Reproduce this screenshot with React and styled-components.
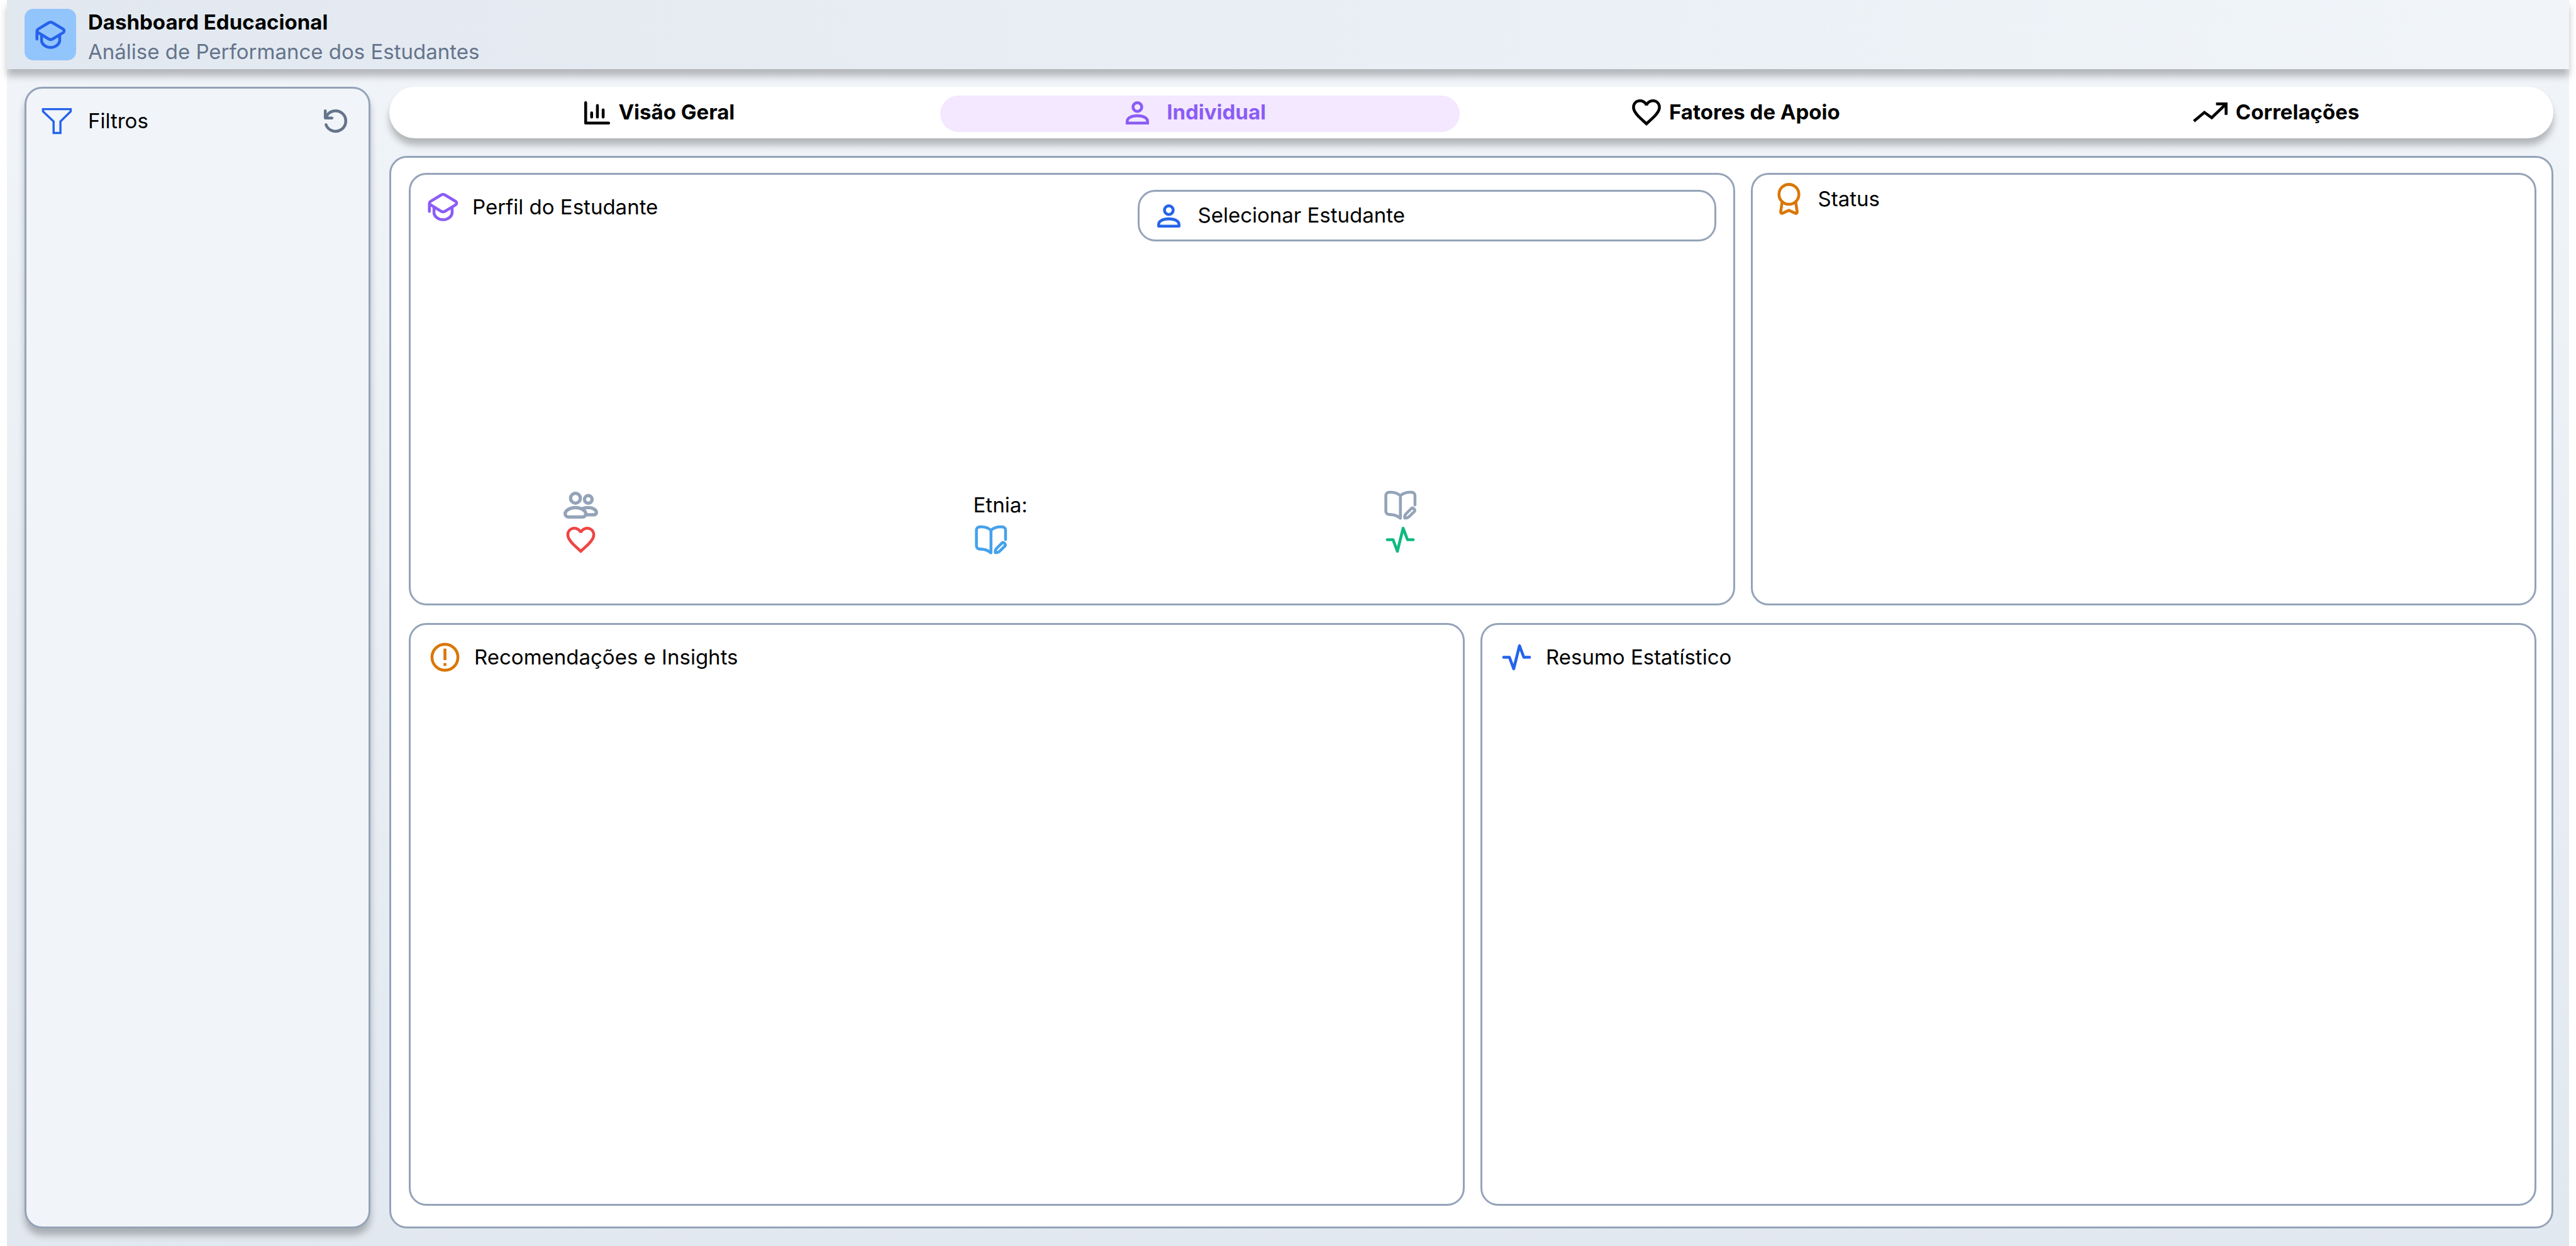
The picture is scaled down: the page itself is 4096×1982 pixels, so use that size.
import React from "react";
import styled, { createGlobalStyle } from "styled-components";

const ink = {
  blue: "#2563eb",
  sky: "#45a2ec",
  purple: "#8b5cf6",
  amber: "#d97706",
  red: "#ef4444",
  green: "#10b981",
  slate: "#64748b",
  line: "#94a3b8",
};

const dropShadow = "0 11px 11px rgba(0, 0, 0, 0.25)";

const GlobalStyle = createGlobalStyle`
  *, *::before, *::after { box-sizing: border-box; }
  body {
    margin: 0;
    background: #ffffff;
    color: #000000;
    font-family: Inter, "Liberation Sans", sans-serif;
    font-size: 33px;
    line-height: 42px;
  }
  h1, h2, p { margin: 0; font-size: inherit; font-weight: 400; }
  button, select { font: inherit; color: inherit; }
`;

const Page = styled.div`
  display: flex;
  flex-direction: column;
  min-height: 100vh;
  margin: 0 11px;
  background: linear-gradient(180deg, #f1f5f9, #e2e8f0);
`;

const Header = styled.header`
  display: flex;
  gap: 19px;
  padding: 14px 28px;
  background: linear-gradient(90deg, #e2e8f0, #f1f5f9);
  box-shadow: ${dropShadow};
`;

const Logo = styled.div`
  display: grid;
  place-items: center;
  width: 82px;
  height: 82px;
  border-radius: 14px;
  background: #93c5fd;
`;

const Heading = styled.div`
  display: flex;
  flex-direction: column;
  gap: 5px;
  height: 82px;
`;

const Title = styled.h1`
  font-weight: 700;
`;

const Subtitle = styled.p`
  color: ${ink.slate};
`;

const Body = styled.div`
  flex: 1;
  display: grid;
  grid-template-columns: 550px 1fr;
  gap: 30px;
  padding: 28px 25px 28px 28px;
`;

const Sidebar = styled.aside`
  padding: 24px 25px 24px 21px;
  border: 3px solid ${ink.line};
  border-radius: 28px;
  background: #f1f5f9;
  box-shadow: ${dropShadow};
`;

const SidebarHead = styled.div`
  display: flex;
  align-items: center;
  gap: 22px;
`;

const Label = styled.h2`
  flex: 1;
  padding-bottom: 2px;
`;

const IconButton = styled.button`
  display: flex;
  padding: 0;
  border: 0;
  background: none;
  cursor: pointer;
`;

const Content = styled.main`
  display: flex;
  flex-direction: column;
  gap: 28px;
`;

const Tabs = styled.nav`
  display: grid;
  grid-template-columns: repeat(4, 1fr);
  gap: 33px;
  padding: 14px 22px 10px 17px;
  border-radius: 41px;
  background: #ffffff;
  box-shadow: ${dropShadow};
`;

const Tab = styled.button`
  display: flex;
  align-items: center;
  justify-content: center;
  gap: ${(p) => (p.$active ? 28 : 13)}px;
  height: 58px;
  padding: 0 0 4px;
  border: 0;
  border-radius: 29px;
  background: ${(p) => (p.$active ? "#f3e8ff" : "transparent")};
  color: ${(p) => (p.$active ? ink.purple : "#000000")};
  font-weight: 700;
  cursor: pointer;

  &:not(:first-child) {
    padding-right: 12px;
  }
`;

const TabName = styled.span`
  padding-bottom: 2px;
`;

const Board = styled.section`
  flex: 1;
  display: grid;
  grid-template-rows: auto 1fr;
  gap: 28px;
  padding: 24px 24px 33px 28px;
  border: 3px solid ${ink.line};
  border-radius: 28px;
  background: #ffffff;
`;

const Row = styled.div`
  display: grid;
  grid-template-columns: ${(p) => p.$columns};
  gap: 25px;
  min-height: ${(p) => p.$minHeight || 0}px;
`;

const Panel = styled.article`
  display: flex;
  flex-direction: column;
  border: 3px solid ${ink.line};
  border-radius: 28px;
  background: #ffffff;
`;

const PanelHead = styled.div`
  display: flex;
  align-items: flex-start;
  justify-content: space-between;
  padding: ${(p) => p.$padding};
`;

const PanelTitle = styled.div`
  display: flex;
  align-items: center;
  gap: 19px;
`;

const Picker = styled.label`
  display: flex;
  align-items: center;
  gap: 19px;
  width: 920px;
  height: 82px;
  padding: 0 19px;
  border: 3px solid ${ink.line};
  border-radius: 28px;
`;

const PickerSelect = styled.select`
  flex: 1;
  appearance: none;
  padding: 0 0 2px;
  border: 0;
  outline: 0;
  background: transparent;
`;

const Facts = styled.div`
  display: grid;
  grid-template-columns: 651fr 651fr 556fr;
  grid-auto-rows: 55px;
  align-items: center;
  margin-top: auto;
  padding: 0 0 74px 243px;
`;

const Fact = styled.p`
  padding-bottom: 2px;
`;

const Svg = styled.svg`
  display: block;
  flex: none;
  width: ${(p) => p.$w}px;
  height: ${(p) => p.$h}px;
  color: ${(p) => p.$color || "currentColor"};
`;

function Glyph({ w = 55, h = 55, box = "0 0 24 24", color, stroke = 2, cap = "round", join = "round", children }) {
  return (
    <Svg
      $w={w}
      $h={h}
      $color={color}
      viewBox={box}
      fill="none"
      stroke="currentColor"
      strokeWidth={stroke}
      strokeLinecap={cap}
      strokeLinejoin={join}
      aria-hidden="true"
    >
      {children}
    </Svg>
  );
}

const CapIcon = ({ color }) => (
  <Glyph color={color}>
    <path d="M13.4 3.6l7.3 4.4c.9.55.9 1.85 0 2.4l-7.3 4.4a2.7 2.7 0 0 1-2.8 0L3.3 10.4c-.9-.55-.9-1.85 0-2.4l7.3-4.4a2.7 2.7 0 0 1 2.8 0z" />
    <path d="M5.7 12v3.8c0 2.5 2.8 4.95 6.3 4.95s6.3-2.45 6.3-4.95V12M2.5 9.5v5.4" />
  </Glyph>
);

const FunnelIcon = () => (
  <Glyph color={ink.blue} box="-1.6 -3 24 24" stroke={1.5} cap="butt" join="miter">
    <path d="M.75.75h19.2v1.6l-7.1 7v7.9H8.1v-7.9L.75 2.35z" />
  </Glyph>
);

const ResetIcon = () => (
  <Glyph color={ink.slate}>
    <path d="M4.9 4.9v5h4.6M5.4 14.6A7.1 7.1 0 1 0 5.5 9.2" />
  </Glyph>
);

const ChartIcon = () => (
  <Glyph w={41} h={37} box="0 0 60 54" stroke={6.67}>
    <path d="M3.3 3.3v47.4h53.4M17.2 27v10M30.6 10v27M44 20v17" />
  </Glyph>
);

const PersonIcon = ({ color, join = "miter" }) => (
  <Glyph w={37} h={37} box="4 4 16 16" color={color} join={join}>
    <circle cx="12" cy="8" r="3" />
    <path d="M5 19v-1.2C5 15.4 8 14 12 14s7 1.4 7 3.8V19z" />
  </Glyph>
);

const PersonSlot = styled.span`
  display: grid;
  place-items: center;
  width: 55px;
  height: 55px;
`;

const HeartIcon = ({ w = 46, h = 42, box = "2 3 20 18.35", color }) => (
  <Glyph w={w} h={h} box={box} color={color} stroke={0}>
    <path
      fill="currentColor"
      d="M16.5 3c-1.74 0-3.41.81-4.5 2.09C10.91 3.81 9.24 3 7.5 3 4.42 3 2 5.42 2 8.5c0 3.78 3.4 6.86 8.55 11.54L12 21.35l1.45-1.32C18.6 15.36 22 12.28 22 8.5 22 5.42 19.58 3 16.5 3zm-4.4 15.55-.1.1-.1-.1C7.14 14.24 4 11.39 4 8.5 4 6.5 5.5 5 7.5 5c1.54 0 3.04.99 3.57 2.36h1.87C13.46 5.99 14.96 5 16.5 5c2 0 3.5 1.5 3.5 3.5 0 2.89-3.14 5.74-7.9 10.05z"
    />
  </Glyph>
);

const TrendIcon = () => (
  <Glyph w={55} h={32} box="0 0 24 14" cap="butt" join="miter">
    <path d="M.6 13 7.9 6.9l5.1 3.7L22.6 1.4M16 1h7v7.6" />
  </Glyph>
);

const MedalIcon = () => (
  <Glyph color={ink.amber}>
    <circle cx="12" cy="8.8" r="6.9" />
    <path d="M7.3 14 6.3 20.8c-.1.9.5 1.5 1.3 1.1L12 19.9l4.4 2c.8.4 1.4-.2 1.3-1.1L16.7 14" />
  </Glyph>
);

const AlertIcon = () => (
  <Glyph color={ink.amber} cap="butt">
    <circle cx="12" cy="12" r="9" />
    <path d="M12 6v8M12 16v2" />
  </Glyph>
);

const PulseIcon = ({ color }) => (
  <Glyph color={color}>
    <path d="M3 12h4l3 8 4-16 3 8h4" />
  </Glyph>
);

const PeopleIcon = () => (
  <Glyph color={ink.line} box="0 -2.6 24 24" stroke={2.3}>
    <circle cx="8.3" cy="4.6" r="3.4" />
    <circle cx="17.2" cy="5.4" r="2.65" />
    <path d="M1.15 15.3c0-2 3-4.25 7.15-4.25s7.15 2.25 7.15 4.25c0 1.3-.9 2.35-2.3 2.35H3.4c-1.4 0-2.25-1.05-2.25-2.35z" />
    <path d="M13.4 11.8c1.1-.5 2.4-.75 3.8-.75 3.2 0 5.65 1.7 5.65 3.5 0 1-.8 1.6-1.9 1.6H15.6" />
  </Glyph>
);

const BookIcon = ({ color }) => (
  <Glyph color={color}>
    <path d="M12.1 21.1c-2.2-1.7-4.6-2.6-7.6-2.6h-.3A2.2 2.2 0 0 1 2 16.3V5.4c0-1.2.9-2.2 2.1-2.3 2.9-.3 5.7.3 8 2.3zM12.1 5.4c2.3-2 5-2.6 8-2.3 1.2.1 2.1 1.1 2.1 2.3v6.5" />
    <path d="M15.1 21c-.1-1 .1-2.2.9-3l3.7-3.7c.4-.4.9-.4 1.3-.1.4.3.7.5.9.9.3.4.3.8-.1 1.3L18.1 20c-.8.8-2 1-3 1z" />
  </Glyph>
);

const tabs = [
  { name: "Visão Geral", icon: <ChartIcon /> },
  { name: "Individual", icon: <PersonIcon />, active: true },
  { name: "Fatores de Apoio", icon: <HeartIcon /> },
  { name: "Correlações", icon: <TrendIcon /> },
];

export default function App() {
  return (
    <>
      <GlobalStyle />
      <Page>
        <Header>
          <Logo>
            <CapIcon color={ink.blue} />
          </Logo>
          <Heading>
            <Title>Dashboard Educacional</Title>
            <Subtitle>Análise de Performance dos Estudantes</Subtitle>
          </Heading>
        </Header>
        <Body>
          <Sidebar>
            <SidebarHead>
              <FunnelIcon />
              <Label>Filtros</Label>
              <IconButton type="button" aria-label="Limpar filtros">
                <ResetIcon />
              </IconButton>
            </SidebarHead>
          </Sidebar>
          <Content>
            <Tabs>
              {tabs.map((tab) => (
                <Tab key={tab.name} type="button" $active={tab.active} aria-pressed={!!tab.active}>
                  {tab.icon}
                  <TabName>{tab.name}</TabName>
                </Tab>
              ))}
            </Tabs>
            <Board>
              <Row $columns="27fr 16fr" $minHeight={688}>
                <Panel>
                  <PanelHead $padding="24px 27px 0 24px">
                    <PanelTitle>
                      <CapIcon color={ink.purple} />
                      <Label>Perfil do Estudante</Label>
                    </PanelTitle>
                    <Picker>
                      <PersonSlot>
                        <PersonIcon color={ink.blue} join="round" />
                      </PersonSlot>
                      <PickerSelect aria-label="Selecionar Estudante" defaultValue="">
                        <option value="">Selecionar Estudante</option>
                      </PickerSelect>
                    </Picker>
                  </PanelHead>
                  <Facts>
                    <PeopleIcon />
                    <Fact>Etnia:</Fact>
                    <BookIcon color={ink.line} />
                    <HeartIcon w={55} h={55} box="0 0 24 24" color={ink.red} />
                    <BookIcon color={ink.sky} />
                    <PulseIcon color={ink.green} />
                  </Facts>
                </Panel>
                <Panel>
                  <PanelHead $padding="11px 30px 0">
                    <PanelTitle>
                      <MedalIcon />
                      <Label>Status</Label>
                    </PanelTitle>
                  </PanelHead>
                </Panel>
              </Row>
              <Row $columns="1fr 1fr">
                <Panel>
                  <PanelHead $padding="24px 27px 0">
                    <PanelTitle>
                      <AlertIcon />
                      <Label>Recomendações e Insights</Label>
                    </PanelTitle>
                  </PanelHead>
                </Panel>
                <Panel>
                  <PanelHead $padding="24px 27px 0">
                    <PanelTitle>
                      <PulseIcon color={ink.blue} />
                      <Label>Resumo Estatístico</Label>
                    </PanelTitle>
                  </PanelHead>
                </Panel>
              </Row>
            </Board>
          </Content>
        </Body>
      </Page>
    </>
  );
}
